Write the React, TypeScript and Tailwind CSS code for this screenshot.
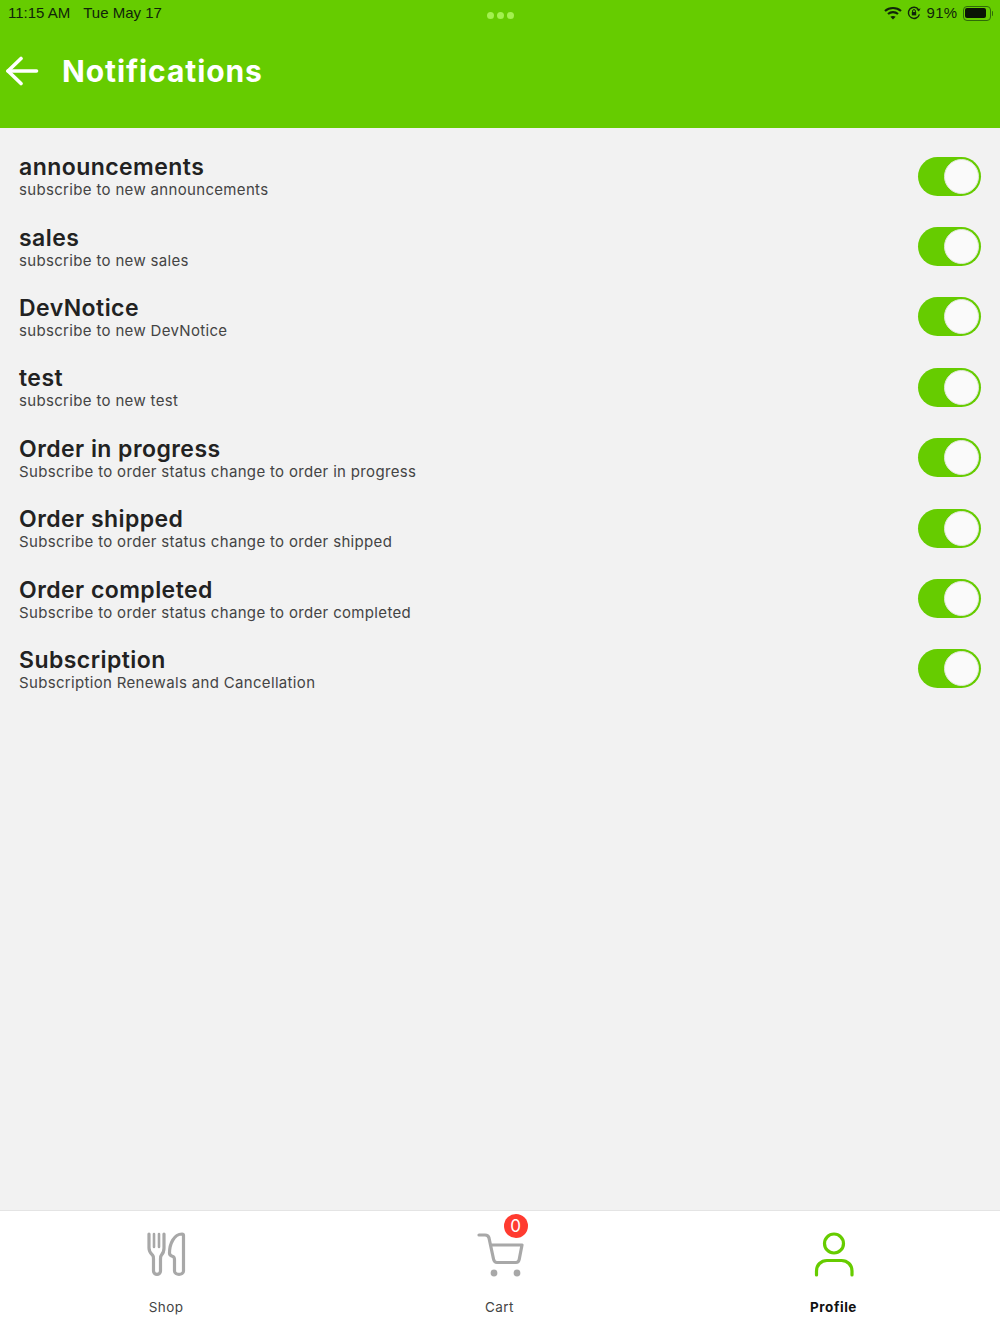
const rows = [
  { title: "announcements", sub: "subscribe to new announcements" },
  { title: "sales", sub: "subscribe to new sales" },
  { title: "DevNotice", sub: "subscribe to new DevNotice" },
  { title: "test", sub: "subscribe to new test" },
  { title: "Order in progress", sub: "Subscribe to order status change to order in progress" },
  { title: "Order shipped", sub: "Subscribe to order status change to order shipped" },
  { title: "Order completed", sub: "Subscribe to order status change to order completed" },
  { title: "Subscription", sub: "Subscription Renewals and Cancellation" },
]

function Toggle() {
  return (
    <div className="flex h-[39px] w-[63px] shrink-0 items-center justify-end rounded-full bg-[#66cc00] pr-[2px]">
      <div className="h-[35px] w-[35px] rounded-full border border-[#dfe8d6] bg-[#fafafa]" />
    </div>
  )
}

function StatusBar() {
  return (
    <div className="relative flex h-[26px] items-center justify-between pl-2 pr-[7px] font-['Liberation_Sans',sans-serif] text-[15px] text-[#10240a]">
      <div className="flex gap-[13px]">
        <span>11:15 AM</span>
        <span>Tue May 17</span>
      </div>
      <div className="absolute left-[487px] top-[12px] flex gap-[3px]">
        <span className="h-[7px] w-[7px] rounded-full bg-[#a3f04f]" />
        <span className="h-[7px] w-[7px] rounded-full bg-[#a3f04f]" />
        <span className="h-[7px] w-[7px] rounded-full bg-[#a3f04f]" />
      </div>
      <div className="flex items-center">
        <svg width="18" height="14" viewBox="0 0 18 14" className="mr-[5px]" fill="none" stroke="#10240a" strokeWidth="2.2">
          <path d="M1 5 C5.5 1 12.5 1 17 5" />
          <path d="M4 8 C6.8 5.6 11.2 5.6 14 8" />
          <path d="M9 13.5 L6.4 10.8 C7.8 9.7 10.2 9.7 11.6 10.8 Z" fill="#10240a" stroke="none" />
        </svg>
        <svg width="14" height="14" viewBox="0 0 14 14" className="mr-[6px]" fill="none" stroke="#10240a" strokeWidth="1.4">
          <path d="M12.4 8.4 A5.6 5.6 0 1 1 11.6 3.6" />
          <path d="M13.6 2.6 L11.9 5.6 L9.4 3.6 Z" fill="#10240a" stroke="none" />
          <rect x="4.8" y="6" width="4.4" height="3.4" fill="#10240a" stroke="none" />
          <path d="M5.6 6 V5 a1.4 1.4 0 0 1 2.8 0 V6" strokeWidth="1" />
        </svg>
        <span className="mr-[5px] tracking-[0.3px]">91%</span>
        <div className="flex items-center">
          <div className="h-[15px] w-[28px] rounded-[4px] border border-[#2e6b08] p-[1.5px]">
            <div className="h-full w-[90%] rounded-[2px] bg-[#0a1405]" />
          </div>
          <div className="ml-[1px] h-[5px] w-[1.5px] rounded-r bg-[#2e6b08]" />
        </div>
      </div>
    </div>
  )
}

function BackArrow() {
  return (
    <svg width="36" height="30" viewBox="0 0 36 30" fill="none" stroke="#ffffff" strokeWidth="3.6" strokeLinecap="round" strokeLinejoin="round">
      <path d="M4 15 H32.5" />
      <path d="M17 2.5 L4 15 L17 27.5" />
    </svg>
  )
}

function ShopIcon() {
  return (
    <svg width="40" height="46" viewBox="0 0 40 46" fill="none" stroke="#a8a8a8" strokeWidth="3.2" strokeLinecap="round" strokeLinejoin="round">
      <path d="M3 3 V17 C3 21 5 22.5 6.5 24 C7.5 25 7.5 26 7.5 28 V40 C7.5 44.5 14.5 44.5 14.5 40 V28 C14.5 26 14.5 25 15.5 24 C17 22.5 18 21 18 17 V3" />
      <path d="M8 3 V16 M13 3 V16" strokeWidth="2.6" />
      <path d="M36 3 C28 3 23.5 13 23.5 22 C23.5 25 26 25 27 25.5 C28.2 26 28.5 27 28.5 29 V40 C28.5 44.5 37.5 44.5 37.5 40 V4.5 C37.5 3.5 37 3 36 3 Z" />
    </svg>
  )
}

function CartIcon() {
  return (
    <svg width="48" height="46" viewBox="0 0 48 46" fill="none" stroke="#a8a8a8" strokeWidth="3.2" strokeLinecap="round" strokeLinejoin="round">
      <path d="M3 4 H9 C11.5 4 12.5 5 13 7 L17.5 28 C18 30.5 19 31.5 21 31.5 H40 C42 31.5 42.8 30.5 43.2 28.5 L46 14 H14.5" />
      <circle cx="18" cy="42" r="3.4" fill="#a8a8a8" stroke="none" />
      <circle cx="41" cy="42" r="3.4" fill="#a8a8a8" stroke="none" />
    </svg>
  )
}

function ProfileIcon() {
  return (
    <svg width="40" height="46" viewBox="0 0 40 46" fill="none" stroke="#66cc00" strokeWidth="3.2" strokeLinecap="round">
      <circle cx="20" cy="12.5" r="9.5" />
      <path d="M2.5 44 V40 C2.5 34 7 29.5 13 29.5 H27.5 C33.5 29.5 38 34 38 40 V44" />
    </svg>
  )
}

export default function App() {
  return (
    <div className="flex h-[1334px] w-[1000px] flex-col bg-[#f2f2f2] font-['Inter',sans-serif]">
      <div className="h-[128px] shrink-0 bg-[#66cc00]">
        <StatusBar />
        <div className="flex items-center pl-[4px] pt-[20px]">
          <BackArrow />
          <h1 className="ml-[22px] text-[30px] font-bold leading-[50px] tracking-[0.9px] text-white">Notifications</h1>
        </div>
      </div>

      <div className="flex-1 pt-[13px]">
        {rows.map((row) => (
          <div key={row.title} className="flex h-[70.4px] items-center justify-between px-[19px]">
            <div>
              <div className="text-[23px] font-semibold leading-[28px] tracking-[0.45px] text-[#222222]">{row.title}</div>
              <div className="text-[15px] leading-[18px] tracking-[0.33px] text-[#444444]">{row.sub}</div>
            </div>
            <Toggle />
          </div>
        ))}
      </div>

      <div className="flex h-[124px] shrink-0 border-t border-[#e4e4e4] bg-white">
        <div className="flex w-[332px] flex-col items-center pt-[20px]">
          <div className="flex h-[46px] items-center"><ShopIcon /></div>
          <span className="mt-[21px] text-[13.5px] leading-[18px] tracking-[0.4px] text-[#444444]">Shop</span>
        </div>
        <div className="flex w-[335px] flex-col items-center pt-[20px]">
          <div className="relative flex h-[46px] items-center">
            <CartIcon />
            <div className="absolute left-[28px] top-[-17px] flex h-[24px] w-[24px] items-center justify-center rounded-full bg-[#ff3b30] text-[17px] leading-none text-white">0</div>
          </div>
          <span className="mt-[21px] text-[13.5px] leading-[18px] tracking-[0.4px] text-[#444444]">Cart</span>
        </div>
        <div className="flex w-[333px] flex-col items-center pt-[20px]">
          <div className="flex h-[46px] items-center"><ProfileIcon /></div>
          <span className="mt-[21px] text-[13.5px] font-bold leading-[18px] tracking-[0.55px] text-[#111111]">Profile</span>
        </div>
      </div>
    </div>
  )
}
